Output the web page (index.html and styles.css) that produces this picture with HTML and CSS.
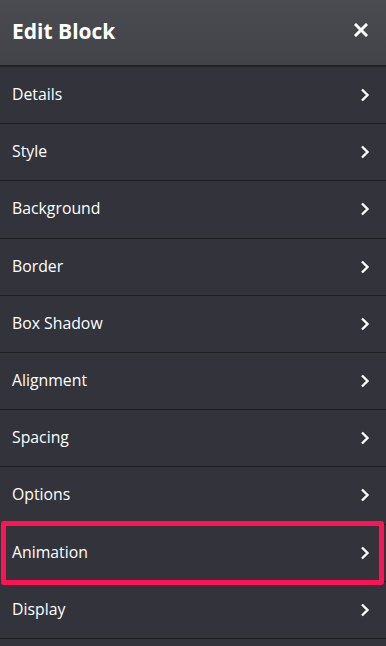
FILE: index.html
```html
<!DOCTYPE html>
<html lang="en">
<head>
	<meta charset="UTF-8">
	<meta name="viewport" content="width=device-width, initial-scale=1.0">
	<title>Edit Block</title>
	<link rel="stylesheet" href="styles.css">
</head>
<body>
	<div class="panel">
		<!-- 标题栏 -->
		<div class="panel_head">
			<h1 class="panel_title">Edit Block</h1>
			<svg class="close" width="14" height="14" viewBox="0 0 14 14">
				<path d="M2 2L12 12M12 2L2 12" stroke="#fff" stroke-width="3" stroke-linecap="square"/>
			</svg>
		</div>
		<!-- 列表 -->
		<ul class="menu">
			<li class="menu_item"><span>Details</span><svg class="arrow" viewBox="0 0 10 14"><path d="M2 1.5L7.5 7L2 12.5" fill="none" stroke="#fff" stroke-width="2.4"/></svg></li>
			<li class="menu_item"><span>Style</span><svg class="arrow" viewBox="0 0 10 14"><path d="M2 1.5L7.5 7L2 12.5" fill="none" stroke="#fff" stroke-width="2.4"/></svg></li>
			<li class="menu_item"><span>Background</span><svg class="arrow" viewBox="0 0 10 14"><path d="M2 1.5L7.5 7L2 12.5" fill="none" stroke="#fff" stroke-width="2.4"/></svg></li>
			<li class="menu_item"><span>Border</span><svg class="arrow" viewBox="0 0 10 14"><path d="M2 1.5L7.5 7L2 12.5" fill="none" stroke="#fff" stroke-width="2.4"/></svg></li>
			<li class="menu_item"><span>Box Shadow</span><svg class="arrow" viewBox="0 0 10 14"><path d="M2 1.5L7.5 7L2 12.5" fill="none" stroke="#fff" stroke-width="2.4"/></svg></li>
			<li class="menu_item"><span>Alignment</span><svg class="arrow" viewBox="0 0 10 14"><path d="M2 1.5L7.5 7L2 12.5" fill="none" stroke="#fff" stroke-width="2.4"/></svg></li>
			<li class="menu_item"><span>Spacing</span><svg class="arrow" viewBox="0 0 10 14"><path d="M2 1.5L7.5 7L2 12.5" fill="none" stroke="#fff" stroke-width="2.4"/></svg></li>
			<li class="menu_item"><span>Options</span><svg class="arrow" viewBox="0 0 10 14"><path d="M2 1.5L7.5 7L2 12.5" fill="none" stroke="#fff" stroke-width="2.4"/></svg></li>
			<li class="menu_item active"><span>Animation</span><svg class="arrow" viewBox="0 0 10 14"><path d="M2 1.5L7.5 7L2 12.5" fill="none" stroke="#fff" stroke-width="2.4"/></svg></li>
			<li class="menu_item"><span>Display</span><svg class="arrow" viewBox="0 0 10 14"><path d="M2 1.5L7.5 7L2 12.5" fill="none" stroke="#fff" stroke-width="2.4"/></svg></li>
		</ul>
	</div>
</body>
</html>
```

FILE: styles.css
```css
* {
	padding: 0;
	margin: 0;
	box-sizing: border-box;
}
body {
	background-color: #32333b;
	font-family: "Open Sans", "Liberation Sans", sans-serif;
	color: #fff;
}
.panel {
	width: 386px;
	min-height: 646px;
	background-color: #32333b;
}
/*标题栏*/
.panel_head {
	height: 67px;
	padding: 0 18px 0 12px;
	display: flex;
	align-items: center;
	justify-content: space-between;
	background: linear-gradient(#4a4b50, #434449);
	border-bottom: 2px solid #212226;
}
.panel_title {
	font-size: 21px;
	font-weight: 700;
	margin-top: -3px;
}
.close {
	margin-top: -5px;
}
/*列表*/
.menu {
	list-style: none;
}
.menu_item {
	height: 57.2px;
	padding: 0 16px 0 12px;
	display: flex;
	align-items: center;
	justify-content: space-between;
	font-size: 15.8px;
	border-bottom: 1px solid #1f2024;
	position: relative;
}
.menu_item span {
	margin-top: -2px;
}
.arrow {
	width: 10px;
	height: 14px;
}
/*红框*/
.active::after {
	content: "";
	position: absolute;
	left: 1px;
	right: 2px;
	top: -4px;
	bottom: -4px;
	border: 5px solid #ff1256;
	border-radius: 3px;
}
```
